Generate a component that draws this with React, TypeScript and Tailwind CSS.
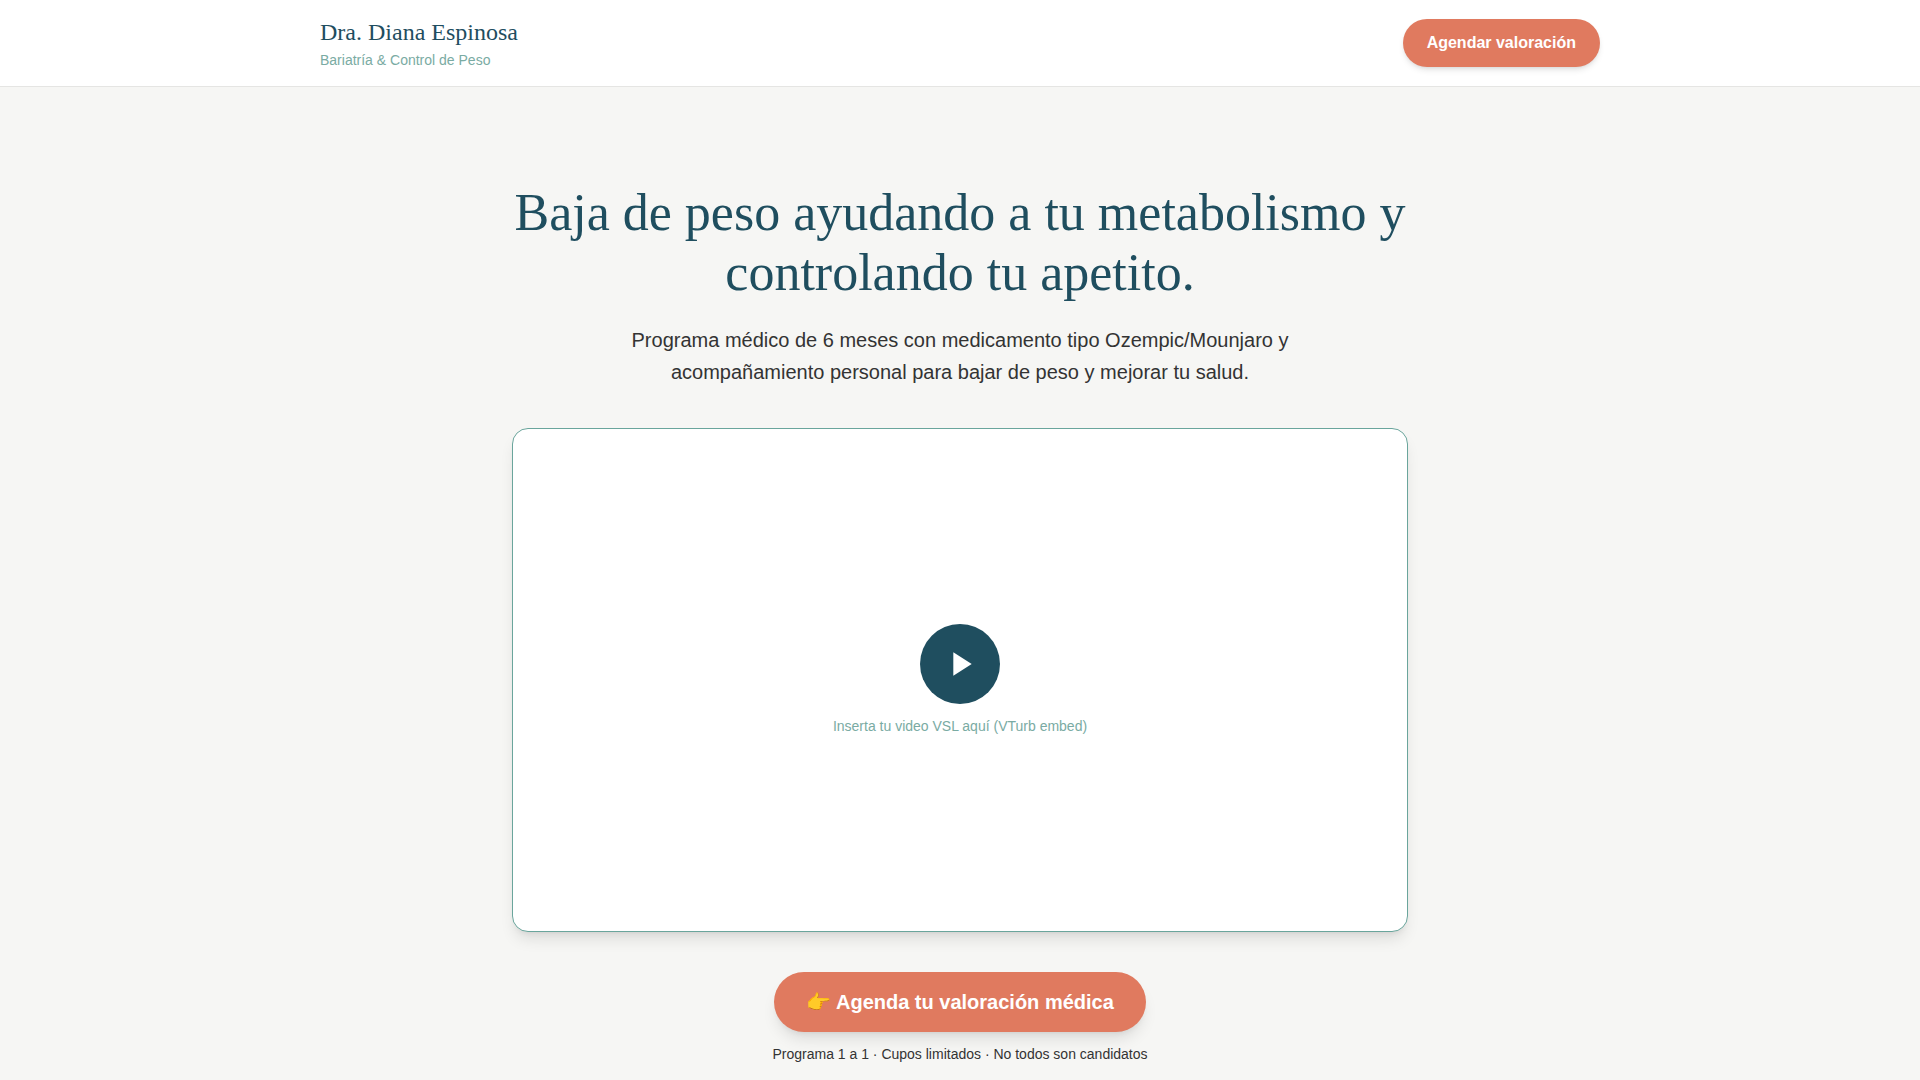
export default function App() {
  return (
    <div className="min-h-screen bg-[#f6f6f4] font-['Liberation_Sans',Arial,sans-serif] text-[#333333]">
      <header className="h-[87px] bg-white border-b border-[#e5e5e3]">
        <div className="mx-auto flex h-[86px] w-[1280px] items-center justify-between">
          <div>
            <div className="font-['Liberation_Serif','Times_New_Roman',serif] text-2xl leading-8 text-[#1f4e5f]">Dra. Diana Espinosa</div>
            <div className="mt-[2px] text-sm leading-5 text-[#7aaba3]">Bariatría &amp; Control de Peso</div>
          </div>
          <a className="rounded-full bg-[#e07a5f] px-6 py-3 text-base leading-6 font-semibold text-white shadow-md">Agendar valoración</a>
        </div>
      </header>
      <main className="flex flex-col items-center pt-24">
        <h1 className="w-[1024px] text-center font-['Liberation_Serif','Times_New_Roman',serif] text-[52px] leading-[60px] text-[#1f4e5f]">
          Baja de peso ayudando a tu metabolismo y controlando tu apetito.
        </h1>
        <p className="mt-[21px] w-[768px] text-center text-xl leading-8">
          Programa médico de 6 meses con medicamento tipo Ozempic/Mounjaro y acompañamiento personal para bajar de peso y mejorar tu salud.
        </p>
        <div className="mt-10 flex h-[504px] w-[896px] flex-col items-center justify-center rounded-2xl border border-[#6aa59c] bg-white shadow-lg">
          <div className="flex h-20 w-20 items-center justify-center rounded-full bg-[#1f4e5f]">
            <svg width="40" height="40" viewBox="0 0 24 24" fill="white"><path d="M8 5v14l11-7z" /></svg>
          </div>
          <p className="mt-3 text-sm leading-5 text-[#7aaba3]">Inserta tu video VSL aquí (VTurb embed)</p>
        </div>
        <a className="mt-10 rounded-full bg-[#e07a5f] px-8 py-4 text-xl leading-7 font-semibold text-white shadow-lg">👉 Agenda tu valoración médica</a>
        <p className="mt-3 text-sm leading-5">Programa 1 a 1 · Cupos limitados · No todos son candidatos</p>
      </main>
    </div>
  );
}
